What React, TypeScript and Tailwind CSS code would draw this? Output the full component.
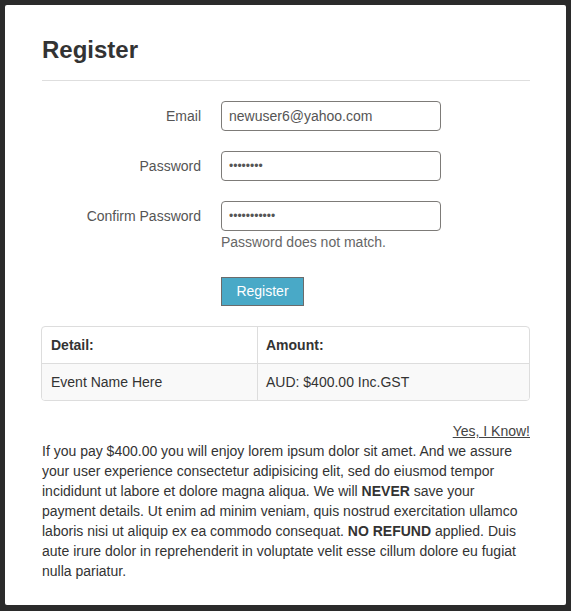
import React from "react";

export default function App() {
  return (
    <div
      className="min-h-[611px] w-full bg-[#2b2b2b] pt-[5px] pl-[5px] pr-[5px] pb-[6px]"
      style={{ fontFamily: '"Liberation Sans", Arial, sans-serif' }}
    >
      <div className="h-[600px] rounded-[2px] bg-white pl-[37px] pr-[36px] pt-[29px]">
        <h3 className="text-[24px] font-bold leading-[32px] text-[#333]">Register</h3>
        <div className="mt-[14px] h-px bg-[#dedede]" />

        <div className="mt-[20px] flex flex-col">
          <div className="flex items-center">
            <label className="w-[159px] text-right text-[14px] text-[#555]">Email</label>
            <input
              readOnly
              value="newuser6@yahoo.com"
              className="ml-[20px] h-[30px] w-[220px] rounded-[4px] border border-[#7d7b78] px-[7px] text-[14px] text-[#555] outline-none"
            />
          </div>
          <div className="mt-[20px] flex items-center">
            <label className="w-[159px] text-right text-[14px] text-[#555]">Password</label>
            <input
              readOnly
              type="password"
              value="12345678"
              className="ml-[20px] h-[30px] w-[220px] rounded-[4px] border border-[#7d7b78] px-[7px] text-[12px] text-[#555] outline-none"
            />
          </div>
          <div className="mt-[20px] flex items-center">
            <label className="w-[159px] text-right text-[14px] text-[#555]">Confirm Password</label>
            <input
              readOnly
              type="password"
              value="12345678901"
              className="ml-[20px] h-[30px] w-[220px] rounded-[4px] border border-[#7d7b78] px-[7px] text-[12px] text-[#555] outline-none"
            />
          </div>
          <div className="ml-[179px] mt-[1px] text-[14px] leading-[20px] text-[#666]">
            Password does not match.
          </div>
          <div className="ml-[179px] mt-[25px]">
            <button className="h-[29px] w-[83px] border border-[#6b6b6b] bg-[#49a9c7] text-[14px] text-white">
              Register
            </button>
          </div>
        </div>

        <div className="-ml-px mt-[20px] overflow-hidden rounded-[4px] border border-[#dddddd] text-[14px] text-[#333]">
          <div className="flex h-[37px] items-center border-b border-[#dddddd]">
            <div className="flex h-full w-[216px] items-center border-r border-[#dddddd] pl-[9px] font-bold">Detail:</div>
            <div className="pl-[8px] font-bold">Amount:</div>
          </div>
          <div className="flex h-[36px] items-center bg-[#f9f9f9]">
            <div className="flex h-full w-[216px] items-center border-r border-[#dddddd] pl-[9px]">Event Name Here</div>
            <div className="pl-[8px]">AUD: $400.00 Inc.GST</div>
          </div>
        </div>

        <div className="mt-[20px] text-right text-[14px] leading-[20px]">
          <a className="text-[#444] underline">Yes, I Know!</a>
        </div>
        <p className="text-[14px] leading-[20px] text-[#333]">
          If you pay $400.00 you will enjoy lorem ipsum dolor sit amet. And we assure your user experience
          consectetur adipisicing elit, sed do eiusmod tempor incididunt ut labore et dolore magna aliqua. We
          will <b>NEVER</b> save your payment details. Ut enim ad minim veniam, quis nostrud exercitation
          ullamco laboris nisi ut aliquip ex ea commodo consequat. <b>NO REFUND</b> applied. Duis aute irure
          dolor in reprehenderit in voluptate velit esse cillum dolore eu fugiat nulla pariatur.
        </p>
      </div>
    </div>
  );
}
